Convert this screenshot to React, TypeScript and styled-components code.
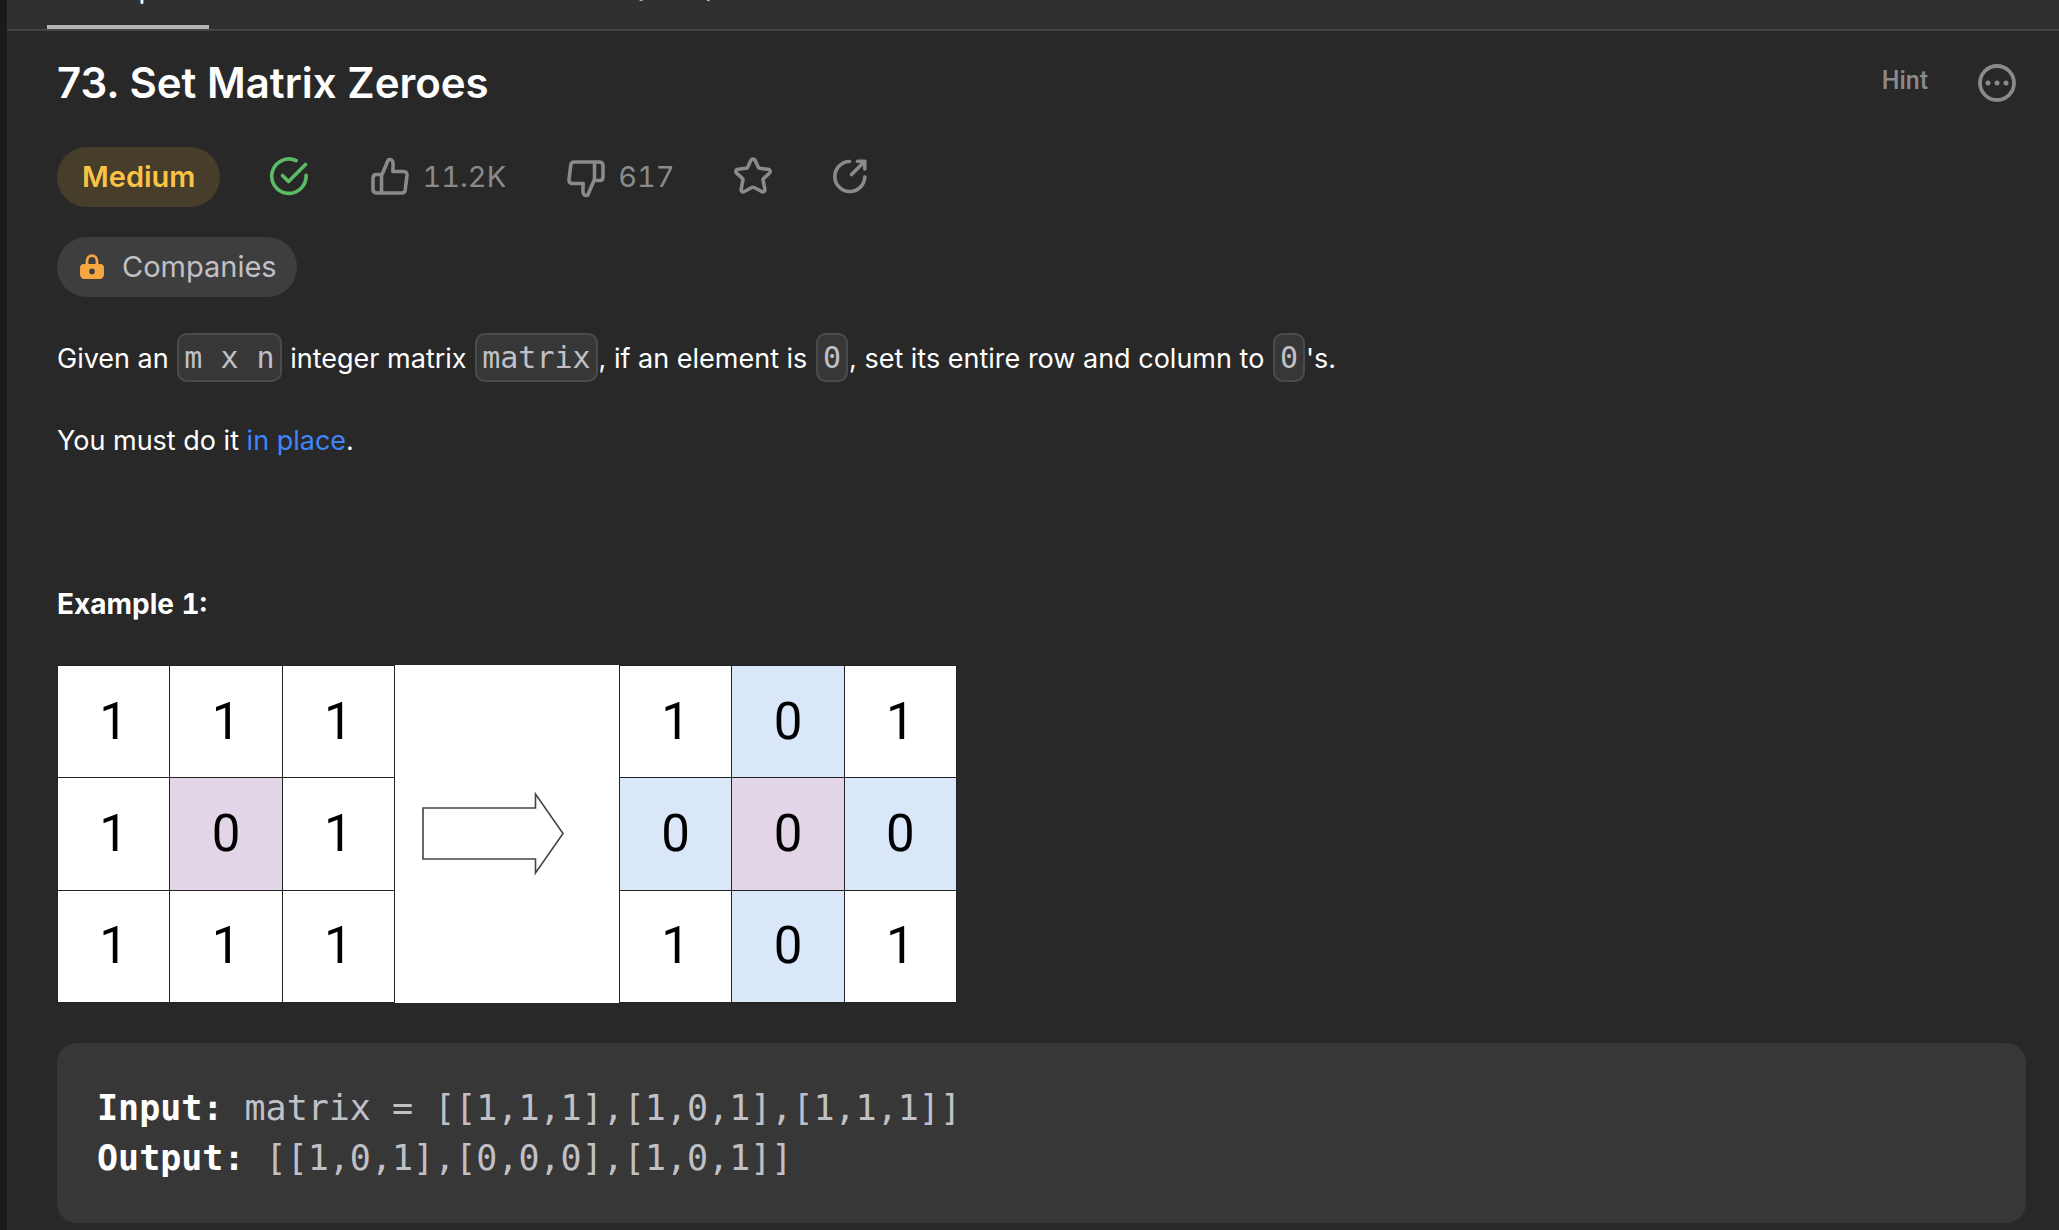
import React from "react";
import styled, { createGlobalStyle } from "styled-components";

const sans = `Inter, "Noto Sans", sans-serif`;
const mono = `"DejaVu Sans Mono", "Liberation Mono", monospace`;

const GlobalStyle = createGlobalStyle`
  *, *::before, *::after { box-sizing: border-box; }
  html { background: #282828; }
  body { margin: 0; overflow: hidden; font-family: ${sans}; color: #fff; }
  h1, h2, p, pre, figure { margin: 0; }
  button { border: 0; background: none; padding: 0; font: inherit; color: inherit; cursor: pointer; }
  svg { display: block; flex: none; }
`;

const Panel = styled.main`
  min-height: 100vh;
  border-left: 7px solid #1a1a1a;
  background: #282828;
`;

const TabBar = styled.nav`
  display: flex;
  gap: 85px;
  height: 80px;
  margin-top: -49px;
  padding: 0 40px;
  background: #303030;
  border-bottom: 2px solid #454545;
`;

const Tab = styled.button<{ $active?: boolean }>`
  display: flex;
  align-items: flex-start;
  padding-top: 18px;
  font-size: 30px;
  line-height: 36px;
  color: ${(p) => (p.$active ? "#fff" : "#b8b8b8")};
  border-bottom: 4px solid ${(p) => (p.$active ? "#b3b3b3" : "transparent")};
`;

const Content = styled.article`
  padding: 24px 33px 7px 50px;
`;

const Header = styled.header`
  display: flex;
  justify-content: space-between;
  align-items: center;
  padding-right: 9px;
`;

const Title = styled.h1`
  font-size: 42px;
  line-height: 56px;
  font-weight: 600;
`;

const HeaderActions = styled.div`
  display: flex;
  align-items: center;
  gap: 49px;
  color: #8a8a8a;
`;

const HintButton = styled.button`
  padding-bottom: 4px;
  font-family: Roboto, sans-serif;
  font-size: 25px;
  line-height: 32px;
  font-weight: 500;
`;

const Meta = styled.div`
  display: flex;
  align-items: center;
  height: 60px;
  margin-top: 36px;
  color: #8a8a8a;
`;

const Pill = styled.span<{ $tone: "medium" | "plain" }>`
  display: inline-flex;
  align-items: center;
  gap: 17px;
  height: 60px;
  padding: ${(p) => (p.$tone === "medium" ? "0 25px" : "0 20px 0 22px")};
  border-radius: 30px;
  font-size: 29px;
  line-height: 40px;
  font-weight: ${(p) => (p.$tone === "medium" ? 600 : 400)};
  color: ${(p) => (p.$tone === "medium" ? "#fac346" : "#c0c0c6")};
  background: ${(p) => (p.$tone === "medium" ? "#463d2b" : "#3e3e3e")};
`;

const MetaItem = styled.div`
  margin-left: 48px;
`;

const MetaButton = styled.button<{ $iconOnly?: boolean }>`
  display: flex;
  align-items: center;
  gap: 12px;
  margin-left: ${(p) => (p.$iconOnly ? 57 : 60)}px;
  font-size: 29px;
  line-height: 40px;
  font-variant-numeric: tabular-nums;
`;

const Companies = styled.button`
  display: block;
  margin-top: 30px;
`;

const Text = styled.p`
  font-size: 27px;
  line-height: 50px;
`;

const Statement = styled.section`
  display: flex;
  flex-direction: column;
  gap: 32px;
  margin-top: 36px;
`;

const Code = styled.code`
  margin: 0 1px;
  padding: 5px;
  border: 2px solid #4b4b4b;
  border-radius: 10px;
  background: #373737;
  color: #c0c0c6;
  font-family: ${mono};
  font-size: 30px;
`;

const Link = styled.a`
  color: #3f86fa;
  text-decoration: none;
`;

const ExampleTitle = styled.h2`
  margin-top: 113px;
  font-size: 28px;
  line-height: 50px;
  font-weight: 700;
  font-variant-numeric: tabular-nums;
`;

const Figure = styled.figure`
  display: flex;
  width: max-content;
  margin-top: 36px;
  background: #fff;
`;

const Matrix = styled.table`
  width: 338px;
  height: 338px;
  table-layout: fixed;
  border-collapse: collapse;
  color: #000;
`;

const Cell = styled.td<{ $fill: string }>`
  padding: 0;
  border: 1px solid #222;
  background: ${(p) => p.$fill};
  font-family: Roboto, sans-serif;
  font-size: 51px;
  line-height: 60px;
  text-align: center;
`;

const Example = styled.pre`
  margin-top: 40px;
  padding: 40px;
  border-radius: 20px;
  background: #373737;
  color: #c0c0c6;
  font-family: ${mono};
  font-size: 35px;
  line-height: 50px;

  strong { color: #fff; }
`;

const stroke = {
  fill: "none",
  stroke: "currentColor",
  strokeWidth: 4,
  strokeLinecap: "round" as const,
  strokeLinejoin: "round" as const,
};

const ThumbPaths = () => (
  <path d="M12 18.5 18 4.5C18.6 3 21.5 3 22.6 5.2 23.4 6.8 23.3 9 22.8 15.5H33.5C36 15.5 37.2 17 37 19.2L35.2 34C34.9 36 33.8 37 32 37H7C4.2 37 3 35.8 3 33.5V22C3 19.7 4.2 18.5 6.5 18.5ZM11.5 18.5V37" />
);

const ThumbUp = () => (
  <svg width="40" height="40" viewBox="0 1 40 40" {...stroke} strokeWidth={3.6}>
    <ThumbPaths />
  </svg>
);

const ThumbDown = () => (
  <svg width="40" height="40" viewBox="0 -2 40 40" overflow="visible" {...stroke} strokeWidth={3.6}>
    <g transform="rotate(180 20 20)">
      <ThumbPaths />
    </g>
  </svg>
);

const Check = () => (
  <svg width="42" height="42" viewBox="0 0 42 42" {...stroke} strokeWidth={3.6} color="#5cbb67" role="img" aria-label="Solved">
    <path d="M28.2 4.6A17.2 17.2 0 1 0 38.1 19.4" />
    <path d="M14.5 19.5 20.5 25.5 37.5 8.5" />
  </svg>
);

const Star = () => (
  <svg width="42" height="42" viewBox="0 1 42 42" {...stroke} strokeWidth={3.6}>
    <path d="M18.9 5.3C19.8 3.5 22.2 3.5 23.1 5.3L26.3 12.2C26.6 12.9 27.1 13.2 27.8 13.3L36 14.3C38.2 14.6 38.9 16.8 37.4 18.2L31.7 23.4C31.1 23.9 30.9 24.5 31.1 25.2L32.8 34.2C33.2 36.3 31.4 37.5 29.6 36.5L22.2 32.5C21.4 32.1 20.6 32.1 19.8 32.5L12.4 36.5C10.6 37.5 8.8 36.3 9.2 34.2L10.9 25.2C11.1 24.5 10.9 23.9 10.3 23.4L4.6 18.2C3.1 16.8 3.8 14.6 6 14.3L14.2 13.3C14.9 13.2 15.4 12.9 15.7 12.2Z" />
  </svg>
);

const Share = () => (
  <svg width="38" height="38" viewBox="0 1 38 38" {...stroke} strokeWidth={3.6}>
    <path d="M18.5 4.5A15 15 0 1 0 33.8 20" />
    <path d="M26.5 4.3H33.8V12M33 5 20.5 17.5" />
  </svg>
);

const Lock = () => (
  <svg width="26" height="28" viewBox="0 0 26 28" fill="none">
    <path d="M8 12V8A5 5.4 0 0 1 18 8V12" stroke="#f6a641" strokeWidth="2.8" />
    <path fill="#f6a641" fillRule="evenodd" d="M5 11H21Q25 11 25 15V21Q25 26 20 26H6Q1 26 1 21V15Q1 11 5 11ZM13 15.6A2.8 2.8 0 1 0 13 21.2A2.8 2.8 0 1 0 13 15.6Z" />
  </svg>
);

const More = () => (
  <svg width="40" height="40" viewBox="0 0 40 40">
    <circle cx="20" cy="20" r="17" fill="none" stroke="currentColor" strokeWidth="3.8" />
    <g fill="currentColor">
      <circle cx="11" cy="20" r="2.5" />
      <circle cx="20" cy="20" r="2.5" />
      <circle cx="29" cy="20" r="2.5" />
    </g>
  </svg>
);

const Arrow = () => (
  <svg width="224" height="338" viewBox="0 0 224 338" role="img" aria-label="becomes">
    <path d="M28 143H140.5V129L168 168.5 140.5 208V194H28Z" fill="#fff" stroke="#444" strokeWidth="1.6" />
  </svg>
);

const fills: Record<string, string> = { w: "#fff", p: "#e1d5e7", b: "#dae7f9" };

const before = [["1w", "1w", "1w"], ["1w", "0p", "1w"], ["1w", "1w", "1w"]];
const after = [["1w", "0b", "1w"], ["0b", "0p", "0b"], ["1w", "0b", "1w"]];

const MatrixTable = ({ rows, label }: { rows: string[][]; label: string }) => (
  <Matrix aria-label={label}>
    <tbody>
      {rows.map((row, r) => (
        <tr key={r}>
          {row.map((c, i) => (
            <Cell key={i} $fill={fills[c[1]]}>{c[0]}</Cell>
          ))}
        </tr>
      ))}
    </tbody>
  </Matrix>
);

export default function App() {
  return (
    <>
      <GlobalStyle />
      <Panel>
        <TabBar>
          <Tab $active>Description</Tab>
          <Tab>Editorial</Tab>
          <Tab>Solutions (7.4K)</Tab>
          <Tab>Submissions</Tab>
        </TabBar>
        <Content>
          <Header>
            <Title>73. Set Matrix Zeroes</Title>
            <HeaderActions>
              <HintButton>Hint</HintButton>
              <button aria-label="More"><More /></button>
            </HeaderActions>
          </Header>
          <Meta>
            <Pill $tone="medium">Medium</Pill>
            <MetaItem><Check /></MetaItem>
            <MetaButton><ThumbUp />11.2K</MetaButton>
            <MetaButton><ThumbDown />617</MetaButton>
            <MetaButton $iconOnly aria-label="Favorite"><Star /></MetaButton>
            <MetaButton $iconOnly aria-label="Share"><Share /></MetaButton>
          </Meta>
          <Companies>
            <Pill $tone="plain"><Lock />Companies</Pill>
          </Companies>
          <Statement>
            <Text>
              Given an <Code>m x n</Code> integer matrix <Code>matrix</Code>, if an element is{" "}
              <Code>0</Code>, set its entire row and column to <Code>0</Code>'s.
            </Text>
            <Text>
              You must do it <Link href="#in-place">in place</Link>.
            </Text>
          </Statement>
          <ExampleTitle>Example 1:</ExampleTitle>
          <Figure>
            <MatrixTable rows={before} label="Input matrix" />
            <Arrow />
            <MatrixTable rows={after} label="Output matrix" />
          </Figure>
          <Example>
            <strong>Input:</strong> matrix = [[1,1,1],[1,0,1],[1,1,1]]{"\n"}
            <strong>Output:</strong> [[1,0,1],[0,0,0],[1,0,1]]
          </Example>
        </Content>
      </Panel>
    </>
  );
}
